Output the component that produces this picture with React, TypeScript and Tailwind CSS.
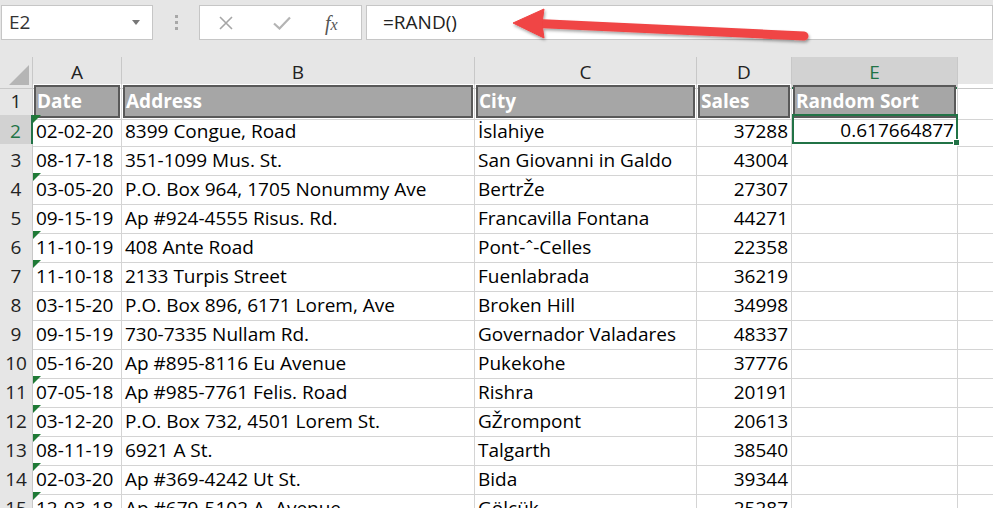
import React from 'react'

const rows: [string, string, string, string, string, boolean][] = [
  ['02-02-20', '8399 Congue, Road', 'İslahiye', '37288', '0.617664877', true],
  ['08-17-18', '351-1099 Mus. St.', 'San Giovanni in Galdo', '43004', '', false],
  ['03-05-20', 'P.O. Box 964, 1705 Nonummy Ave', 'BertrŽe', '27307', '', true],
  ['09-15-19', 'Ap #924-4555 Risus. Rd.', 'Francavilla Fontana', '44271', '', false],
  ['11-10-19', '408 Ante Road', 'Pont-ˆ-Celles', '22358', '', true],
  ['11-10-18', '2133 Turpis Street', 'Fuenlabrada', '36219', '', true],
  ['03-15-20', 'P.O. Box 896, 6171 Lorem, Ave', 'Broken Hill', '34998', '', false],
  ['09-15-19', '730-7335 Nullam Rd.', 'Governador Valadares', '48337', '', false],
  ['05-16-20', 'Ap #895-8116 Eu Avenue', 'Pukekohe', '37776', '', false],
  ['07-05-18', 'Ap #985-7761 Felis. Road', 'Rishra', '20191', '', true],
  ['03-12-20', 'P.O. Box 732, 4501 Lorem St.', 'GŽrompont', '20613', '', true],
  ['08-11-19', '6921 A St.', 'Talgarth', '38540', '', true],
  ['02-03-20', 'Ap #369-4242 Ut St.', 'Bida', '39344', '', true],
  ['12-03-18', 'Ap #679-5102 A. Avenue', 'Gölcük', '25287', '', true],
]

const cols = 'grid grid-cols-[33px_89px_353px_222px_95px_166px_1fr]'
const cell = 'border-r border-b border-[#d4d4d4] flex items-center px-[3px] pt-[2px] whitespace-nowrap overflow-hidden'

function FormulaBar() {
  return (
    <div className="h-[57px] bg-[#e6e6e6] flex items-start pt-[5px] pl-[1px]">
      <div className="w-[152px] h-[35px] bg-white border border-[#c6c6c6] flex items-center justify-between pl-[7px] pr-[12px] text-[19px] text-[#333]">
        <span>E2</span>
        <svg width="8" height="5" viewBox="0 0 8 5"><path d="M0 0h8L4 5z" fill="#777" /></svg>
      </div>
      <div className="w-[46px] h-[35px] flex flex-col items-center justify-center gap-[3px]">
        <div className="w-[3px] h-[3px] bg-[#a8a8a8]" />
        <div className="w-[3px] h-[3px] bg-[#a8a8a8]" />
        <div className="w-[3px] h-[3px] bg-[#a8a8a8]" />
      </div>
      <div className="w-[163px] h-[35px] bg-white border border-[#c6c6c6] flex items-center">
        <svg className="ml-[19px]" width="14" height="14" viewBox="0 0 14 14">
          <path d="M1 1L13 13M13 1L1 13" stroke="#a6a6a6" strokeWidth="1.6" />
        </svg>
        <svg className="ml-[40px]" width="18" height="14" viewBox="0 0 18 14">
          <path d="M1 7.5L6.5 12.5L17 1.5" stroke="#b4b4b4" strokeWidth="2.2" fill="none" />
        </svg>
        <span className="ml-[34px] text-[20px] italic text-[#555] font-['Liberation_Serif',serif] leading-none">
          f<span className="text-[16px]">x</span>
        </span>
      </div>
      <div className="ml-[4px] flex-1 h-[35px] bg-white border border-[#c6c6c6] flex items-center pl-[16px] text-[19px] text-[#222]">
        =RAND()
      </div>
    </div>
  )
}

function Arrow() {
  return (
    <svg className="absolute left-0 top-0 pointer-events-none" width="993" height="60" viewBox="0 0 993 60">
      <defs>
        <filter id="sh" x="-10%" y="-50%" width="120%" height="200%">
          <feDropShadow dx="1" dy="2" stdDeviation="1.5" floodColor="#000" floodOpacity="0.35" />
        </filter>
      </defs>
      <g filter="url(#sh)" fill="#f04444" stroke="#f04444">
        <line x1="538" y1="23.5" x2="804" y2="36" strokeWidth="9" strokeLinecap="round" />
        <path d="M513 23L544 9L542 23.5L544 38Z" strokeWidth="1" strokeLinejoin="round" />
      </g>
    </svg>
  )
}

export default function App() {
  return (
    <div className="relative w-[993px] h-[508px] overflow-hidden bg-white font-['Open_Sans',sans-serif] text-[19px] text-black">
      <FormulaBar />
      <Arrow />

      {/* column headers */}
      <div className={`${cols} h-[27px] bg-[#e6e6e6] text-[#222]`}>
        <div className="border-r border-b border-[#c8c8c8] relative">
          <svg className="absolute right-[3px] bottom-[3px]" width="20" height="20" viewBox="0 0 20 20">
            <path d="M20 0V20H0Z" fill="#b5b5b5" />
          </svg>
        </div>
        {['A', 'B', 'C', 'D'].map(c => (
          <div key={c} className="border-r border-b border-[#c8c8c8] flex items-center justify-center">{c}</div>
        ))}
        <div className="bg-[#d2d2d2] border-r border-[#c8c8c8] border-b-2 border-b-[#217346] flex items-center justify-center pt-[1px] text-[#217346]">E</div>
        <div className="border-b border-[#c8c8c8]" />
      </div>

      {/* header row 1 */}
      <div className={`${cols} h-[31px]`}>
        <div className="bg-[#e6e6e6] border-r border-b border-[#c8c8c8] flex items-center justify-center text-[#222]">1</div>
        {['Date', 'Address', 'City', 'Sales', 'Random Sort'].map(h => (
          <div key={h} className="border-r border-b border-[#d4d4d4] p-[1px]">
            <div className="h-full bg-[#a6a6a6] border-2 border-[#595959] flex items-center px-[1px] font-bold text-white whitespace-nowrap overflow-hidden">
              {h}
            </div>
          </div>
        ))}
        <div className="border-b border-[#d4d4d4]" />
      </div>

      {rows.map((r, i) => {
        const n = i + 2
        const sel = n === 2
        return (
          <div key={n} className={`${cols} h-[29px]`}>
            <div
              className={`flex items-center justify-center pt-[2px] border-b border-[#c8c8c8] ${
                sel ? 'bg-[#d2d2d2] text-[#217346] border-r-2 border-r-[#217346]' : 'bg-[#e6e6e6] text-[#222] border-r'
              }`}
            >
              {n}
            </div>
            <div className={`${cell} relative`}>
              {r[5] && (
                <svg className="absolute left-0 top-0" width="8" height="8" viewBox="0 0 8 8">
                  <path d="M0 0H8L0 8Z" fill="#1f7a36" />
                </svg>
              )}
              {r[0]}
            </div>
            <div className={cell}>{r[1]}</div>
            <div className={cell}>{r[2]}</div>
            <div className={`${cell} justify-end`}>{r[3]}</div>
            {sel ? (
              <div className="relative border-2 border-[#217346] flex items-center justify-end px-[2px] pt-[2px] -mt-[1px] h-[30px] whitespace-nowrap">
                {r[4]}
                <div className="absolute -right-[4px] -bottom-[4px] w-[7px] h-[7px] bg-[#217346] border border-white" />
              </div>
            ) : (
              <div className={cell} />
            )}
            <div className="border-b border-[#d4d4d4]" />
          </div>
        )
      })}
    </div>
  )
}
